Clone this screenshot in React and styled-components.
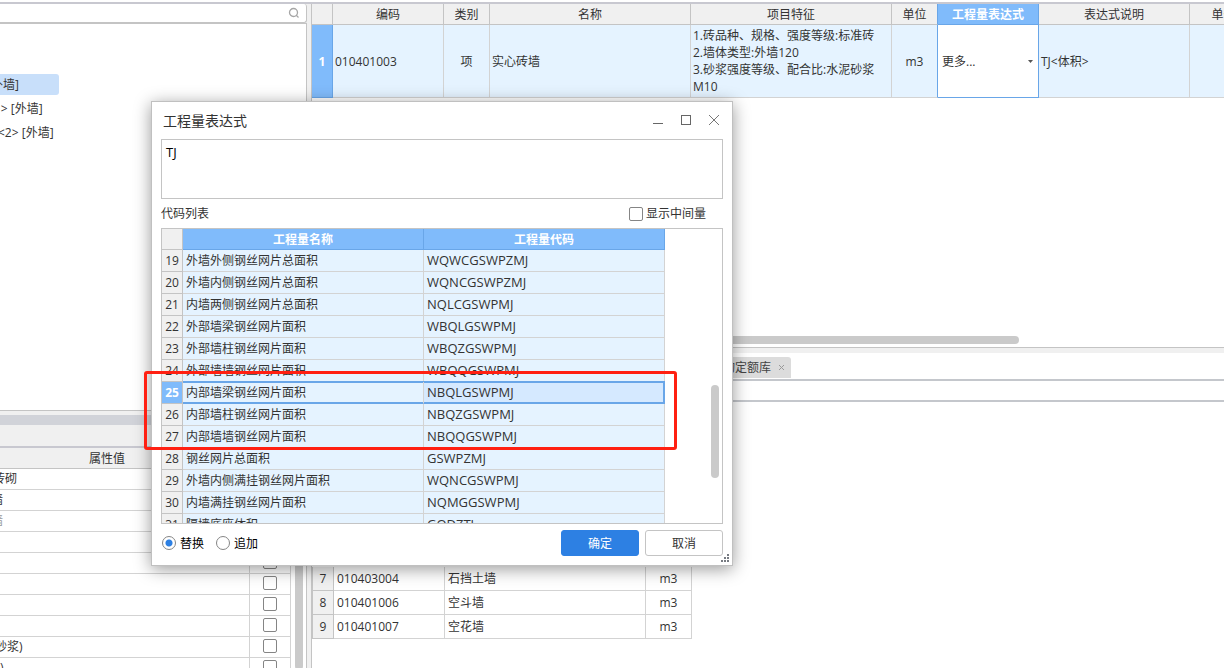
import React, { useState } from "react";
import styled, { createGlobalStyle } from "styled-components";

const line = "#c4c4c4";
const softLine = "#d3d3d3";
const blue = "#80bbfb";
const blueLine = "#69a6e8";
const paleBlue = "#e5f3ff";
const head = "#f0f0f0";

const treeItems = [
  { id: 1, label: "外墙]", hidden: 9, active: true },
  { id: 2, label: "<1> [外墙]", hidden: 13 },
  { id: 3, label: "<2> [外墙]", hidden: 2 },
];

const properties = [
  { id: 1, value: "砖砌", hidden: 7 },
  { id: 2, value: "墙", hidden: 9 },
  { id: 3, value: "墙", hidden: 9, muted: true },
  { id: 4, value: "" },
  { id: 5, value: "" },
  { id: 6, value: "" },
  { id: 7, value: "" },
  { id: 8, value: "" },
  { id: 9, value: "砂浆)", hidden: 5 },
  { id: 10, value: ")", hidden: 0 },
];

const codes = [
  { id: 19, name: "外墙外侧钢丝网片总面积", code: "WQWCGSWPZMJ" },
  { id: 20, name: "外墙内侧钢丝网片总面积", code: "WQNCGSWPZMJ" },
  { id: 21, name: "内墙两侧钢丝网片总面积", code: "NQLCGSWPMJ" },
  { id: 22, name: "外部墙梁钢丝网片面积", code: "WBQLGSWPMJ" },
  { id: 23, name: "外部墙柱钢丝网片面积", code: "WBQZGSWPMJ" },
  { id: 24, name: "外部墙墙钢丝网片面积", code: "WBQQGSWPMJ" },
  { id: 25, name: "内部墙梁钢丝网片面积", code: "NBQLGSWPMJ" },
  { id: 26, name: "内部墙柱钢丝网片面积", code: "NBQZGSWPMJ" },
  { id: 27, name: "内部墙墙钢丝网片面积", code: "NBQQGSWPMJ" },
  { id: 28, name: "钢丝网片总面积", code: "GSWPZMJ" },
  { id: 29, name: "外墙内侧满挂钢丝网片面积", code: "WQNCGSWPMJ" },
  { id: 30, name: "内墙满挂钢丝网片面积", code: "NQMGGSWPMJ" },
  { id: 31, name: "隔墙底座体积", code: "GQDZTJ" },
];

const listItems = [
  { id: 7, code: "010403004", name: "石挡土墙", unit: "m3" },
  { id: 8, code: "010401006", name: "空斗墙", unit: "m3" },
  { id: 9, code: "010401007", name: "空花墙", unit: "m3" },
];

export default function App() {
  return (
    <>
      <GlobalStyle />
      <Page>
        <Sidebar>
          <SearchBox>
            <input aria-label="search" type="text" />
            <svg width="12" height="12" viewBox="0 0 12 12" fill="none">
              <circle cx="5.5" cy="5.5" r="4" stroke="#a6a6a6" strokeWidth="1.3" />
              <path d="M8 8L10.5 10.5" stroke="#a6a6a6" strokeWidth="1.3" />
            </svg>
          </SearchBox>
          <Tree>
            {treeItems.map((e) => (
              <TreeItem key={e.id} $active={e.active}>
                <Clipped $hidden={e.hidden}>{e.label}</Clipped>
              </TreeItem>
            ))}
          </Tree>
          <Splitter />
          <PropertyBar />
          <PropertyArea>
            <PropertyTable />
            <PropertyTrack>
              <VerticalThumb />
            </PropertyTrack>
          </PropertyArea>
        </Sidebar>
        <Main>
          <TopPane>
            <QuantityTable />
            <HorizontalThumb />
          </TopPane>
          <BottomPane>
            <Tabs>
              <Tab>
                查询定额库
                <svg width="7" height="7" viewBox="0 0 7 7">
                  <path d="M1 1L6 6M6 1L1 6" stroke="#9a9a9a" />
                </svg>
              </Tab>
            </Tabs>
            <FilterBar />
            <ListTable />
          </BottomPane>
        </Main>
        <ExpressionDialog />
      </Page>
    </>
  );
}

const PropertyTable = () => {
  return (
    <PropertyGrid>
      <colgroup>
        <col />
        <col style={{ width: 41 }} />
      </colgroup>
      <thead>
        <tr>
          <th>属性值</th>
          <th />
        </tr>
      </thead>
      <tbody>
        {properties.map((e) => (
          <tr key={e.id}>
            <PropertyCell $muted={e.muted}>
              <Clipped $hidden={e.hidden}>{e.value}</Clipped>
            </PropertyCell>
            <td>
              <CheckBox type="checkbox" aria-label={e.value || "附加"} />
            </td>
          </tr>
        ))}
      </tbody>
    </PropertyGrid>
  );
};

const QuantityTable = () => {
  const widths = [21, 111, 46, 201, 201, 46, 101, 151, 68];
  return (
    <Quantity>
      <colgroup>
        {widths.map((w, i) => (
          <col key={i} style={{ width: w }} />
        ))}
      </colgroup>
      <thead>
        <tr>
          <th />
          <th>编码</th>
          <th>类别</th>
          <th>名称</th>
          <th>项目特征</th>
          <th className="before-active">单位</th>
          <th className="active">工程量表达式</th>
          <th>表达式说明</th>
          <th>单价</th>
        </tr>
      </thead>
      <tbody>
        <tr>
          <td className="index">1</td>
          <td>010401003</td>
          <td className="center">项</td>
          <td>实心砖墙</td>
          <td className="feature">
            1.砖品种、规格、强度等级:标准砖
            <br />
            2.墙体类型:外墙120
            <br />
            3.砂浆强度等级、配合比:水泥砂浆M10
          </td>
          <td className="center before-active">m3</td>
          <td className="editing">
            <ExpressionSelect>
              <select aria-label="工程量表达式">
                <option>更多...</option>
              </select>
              <svg width="5" height="3" viewBox="0 0 5 3">
                <path d="M0 0H5L2.5 3Z" fill="#555" />
              </svg>
            </ExpressionSelect>
          </td>
          <td>TJ&lt;体积&gt;</td>
          <td />
        </tr>
      </tbody>
    </Quantity>
  );
};

const ListTable = () => {
  return (
    <ListGrid>
      <colgroup>
        <col style={{ width: 21 }} />
        <col style={{ width: 111 }} />
        <col style={{ width: 201 }} />
        <col style={{ width: 46 }} />
      </colgroup>
      <tbody>
        {listItems.map((e) => (
          <tr key={e.id}>
            <td className="index">{e.id}</td>
            <td>{e.code}</td>
            <td>{e.name}</td>
            <td className="center">{e.unit}</td>
          </tr>
        ))}
      </tbody>
    </ListGrid>
  );
};

const ExpressionDialog = () => {
  const [selected, setSelected] = useState(25);
  const [mode, setMode] = useState("replace");

  return (
    <Dialog role="dialog" aria-label="工程量表达式">
      <TitleBar>
        <h1>工程量表达式</h1>
        <WindowButton aria-label="minimize">
          <svg width="12" height="12" viewBox="0 0 12 12">
            <path d="M1 9.5H11" stroke="#666" />
          </svg>
        </WindowButton>
        <WindowButton aria-label="maximize">
          <svg width="12" height="12" viewBox="0 0 12 12" fill="none">
            <rect x="1.5" y="1.5" width="9" height="9" stroke="#666" />
          </svg>
        </WindowButton>
        <WindowButton aria-label="close">
          <svg width="12" height="12" viewBox="0 0 12 12">
            <path d="M1 1L11 11M11 1L1 11" stroke="#777" />
          </svg>
        </WindowButton>
      </TitleBar>
      <Expression aria-label="表达式" defaultValue="TJ" />
      <ListCaption>
        <span>代码列表</span>
        <label>
          <CheckBox type="checkbox" />
          显示中间量
        </label>
      </ListCaption>
      <CodeArea>
        <CodeGrid>
          <colgroup>
            <col style={{ width: 21 }} />
            <col style={{ width: 241 }} />
            <col style={{ width: 241 }} />
          </colgroup>
          <thead>
            <tr>
              <th className="corner" />
              <th>工程量名称</th>
              <th>工程量代码</th>
            </tr>
          </thead>
          <tbody>
            {codes.map((e) => (
              <CodeRow
                key={e.id}
                $selected={e.id === selected}
                onClick={() => setSelected(e.id)}
              >
                <td className="index">{e.id}</td>
                <td className="name">{e.name}</td>
                <td className="code">{e.code}</td>
              </CodeRow>
            ))}
          </tbody>
        </CodeGrid>
        <CodeTrack>
          <VerticalThumb $height="93px" />
        </CodeTrack>
      </CodeArea>
      <Footer>
        <label>
          <Radio
            type="radio"
            name="mode"
            checked={mode === "replace"}
            onChange={() => setMode("replace")}
          />
          替换
        </label>
        <label>
          <Radio
            type="radio"
            name="mode"
            checked={mode === "append"}
            onChange={() => setMode("append")}
          />
          追加
        </label>
        <Buttons>
          <Button $primary>确定</Button>
          <Button>取消</Button>
        </Buttons>
      </Footer>
      <Grip width="8" height="8" viewBox="0 0 8 8" fill="#777b82">
        <path d="M6 0h2v2h-2zM3 3h2v2h-2zM6 3h2v2h-2zM0 6h2v2h-2zM3 6h2v2h-2zM6 6h2v2h-2z" />
      </Grip>
      <Highlight />
    </Dialog>
  );
};

const GlobalStyle = createGlobalStyle`
  * {
    box-sizing: border-box;
  }
  body {
    margin: 0;
    overflow: hidden;
    color: #333;
    background: #fff;
  }
  body, input, button, select, textarea {
    font-family: "Open Sans", "Noto Sans CJK SC", sans-serif;
    font-size: 12px;
    line-height: 17px;
  }
`;

const Page = styled.div`
  position: relative;
  display: flex;
  gap: 4px;
  height: 100vh;
  background: ${head};
  border-top: 2px solid #c8c8d0;
  margin-top: 2px;
`;

const Sidebar = styled.aside`
  display: flex;
  flex-direction: column;
  width: 307px;
  flex-shrink: 0;
  overflow: hidden;
`;

const SearchBox = styled.div`
  display: flex;
  align-items: center;
  height: 19px;
  flex-shrink: 0;
  padding-right: 6px;
  background: #fff;
  border: 1px solid ${line};
  border-width: 0 1px 1px 0;
  border-radius: 0 3px 3px 0;

  input {
    flex: 1;
    min-width: 0;
    height: 16px;
    padding: 0;
    border: none;
    outline: none;
  }
`;

const Tree = styled.ul`
  height: 388px;
  flex-shrink: 0;
  margin: 0;
  padding: 50px 0 0;
  list-style: none;
  background: #fff;
  border: 1px solid ${line};
  border-left: none;
`;

const TreeItem = styled.li`
  width: 59px;
  height: 21px;
  margin-bottom: 3px;
  line-height: 21px;
  border-radius: 0 3px 3px 0;
  overflow: hidden;
  background: ${(p) => (p.$active ? "#c8dffa" : "none")};
`;

/* the pane is scrolled sideways, so labels start left of its edge */
const Clipped = styled.span`
  display: block;
  margin-left: ${(p) => -(p.$hidden || 0)}px;
  white-space: nowrap;
`;

const Splitter = styled.div`
  height: 10px;
  flex-shrink: 0;
  margin-top: 4px;
  background: #d1d3d9;
`;

const PropertyBar = styled.div`
  height: 23px;
  flex-shrink: 0;
  border-bottom: 2px solid #c8c8d0;
`;

const PropertyArea = styled.div`
  display: flex;
  flex: 1;
  min-height: 0;
  background: #fff;
  border-right: 1px solid ${line};
`;

const PropertyTrack = styled.div`
  display: flex;
  flex: 1;
  justify-content: flex-end;
  padding-right: 3px;
`;

const VerticalThumb = styled.div`
  width: 8px;
  height: ${(p) => p.$height || "100%"};
  border-radius: 4px;
  background: #cacaca;
`;

const Table = styled.table`
  table-layout: fixed;
  border-collapse: separate;
  border-spacing: 0;
  flex-shrink: 0;

  th,
  td {
    padding: 0 2px;
    text-align: left;
    font-weight: 400;
    white-space: nowrap;
    border-right: 1px solid ${softLine};
    border-bottom: 1px solid ${softLine};
  }
  th {
    text-align: center;
    background: ${head};
    border-color: ${line};
  }
  .center {
    text-align: center;
  }
  .index {
    padding: 0;
    text-align: center;
    background: ${head};
    border-color: ${line};
  }
`;

const PropertyGrid = styled(Table)`
  width: 291px;
  height: max-content;

  th {
    height: 21px;
  }
  th:first-child {
    padding-right: 38px;
    border-right: none;
  }
  td {
    height: 21px;
    padding: 0;
    overflow: hidden;
    line-height: 16px;
    text-align: center;
  }
`;

const PropertyCell = styled.td`
  && {
    text-align: left;
    color: ${(p) => (p.$muted ? "#999" : "#333")};
  }
`;

const CheckBox = styled.input`
  appearance: none;
  display: inline-block;
  width: 14px;
  height: 14px;
  margin: 0;
  vertical-align: top;
  background: #fff;
  border: 1px solid #858585;
  border-radius: 2px;

  &:checked {
    background: #2d80e3;
  }
`;

const Main = styled.main`
  display: flex;
  flex: 1;
  flex-direction: column;
  min-width: 0;
  overflow: hidden;
  border-left: 1px solid ${line};
`;

const TopPane = styled.section`
  display: flex;
  flex-direction: column;
  justify-content: space-between;
  height: 344px;
  flex-shrink: 0;
  overflow: hidden;
  padding-bottom: 3px;
  background: #fff;
  border-bottom: 1px solid ${line};
`;

const Quantity = styled(Table)`
  width: 946px;

  th {
    height: 21px;
  }
  td {
    height: 73px;
    background: ${paleBlue};
  }
  .before-active {
    border-right-color: ${blueLine};
  }
  .active {
    color: #fff;
    font-weight: 700;
    background: ${blue};
    border-color: ${blueLine};
  }
  .feature {
    white-space: normal;
  }
  .editing {
    background: #fff;
    border-color: ${blueLine};
  }
  .index {
    color: #fff;
    font-weight: 700;
    background: ${blue};
    border-color: ${blueLine};
  }
`;

const ExpressionSelect = styled.div`
  display: flex;
  align-items: center;
  padding: 0 3px 0 2px;

  select {
    flex: 1;
    min-width: 0;
    padding: 0;
    color: #333;
    appearance: none;
    background: none;
    border: none;
    outline: none;
  }
`;

const HorizontalThumb = styled.div`
  width: 707px;
  height: 8px;
  border-radius: 4px;
  background: #cacaca;
`;

const BottomPane = styled.section`
  flex: 1;
  margin-top: 5px;
  background: #fff;
`;

const Tabs = styled.div`
  display: flex;
  height: 28px;
  padding: 4px 0 1px 387px;
  border-bottom: 2px solid #c4c7cc;
`;

const Tab = styled.button`
  display: flex;
  align-items: center;
  gap: 7px;
  padding: 0 6px 0 12px;
  color: #444;
  background: #dcdcdc;
  border: none;
  border-radius: 3px 3px 0 0;
`;

const FilterBar = styled.div`
  height: 21px;
  border-bottom: 2px solid #c4c7cc;
`;

const ListGrid = styled(Table)`
  width: 380px;
  margin-top: 165px;
  border-left: 1px solid ${line};

  td {
    height: 24px;
    padding: 0 3px;
  }
`;

const Dialog = styled.div`
  position: absolute;
  top: 97px;
  left: 151px;
  width: 582px;
  padding: 0 9px 9px;
  background: #fff;
  border: 1px solid #c0c0c0;
  box-shadow: 0 3px 16px rgba(0, 0, 0, 0.4);
`;

const TitleBar = styled.div`
  display: flex;
  align-items: center;
  gap: 16px;
  height: 37px;
  padding: 0 3px 0 2px;

  h1 {
    flex: 1;
    margin: 0;
    font-size: 14px;
    font-weight: 400;
  }
`;

const WindowButton = styled.button`
  display: flex;
  padding: 0 0 2px;
  background: none;
  border: none;
`;

const Expression = styled.textarea`
  display: block;
  width: 100%;
  height: 60px;
  padding: 4px;
  font-size: 13px;
  color: #000;
  border: 1px solid ${line};
  outline: none;
  resize: none;
`;

const ListCaption = styled.div`
  display: flex;
  align-items: center;
  justify-content: space-between;
  height: 29px;
  padding-right: 17px;

  label {
    display: flex;
    align-items: center;
    gap: 3px;
  }
`;

const CodeArea = styled.div`
  display: flex;
  height: 296px;
  overflow: hidden;
  border: 1px solid ${line};
`;

const CodeGrid = styled(Table)`
  width: 503px;
  height: max-content;

  th {
    height: 21px;
    color: #fff;
    font-weight: 700;
    background: ${blue};
    border-color: ${blueLine};
  }
  .corner {
    background: ${head};
    border-color: ${line};
  }
`;

const CodeRow = styled.tr`
  td {
    height: 22px;
    padding: 0 3px;
    background: ${paleBlue};
  }
  td.index {
    padding: 0;
    color: ${(p) => (p.$selected ? "#fff" : "#333")};
    font-weight: ${(p) => (p.$selected ? 700 : 400)};
    background: ${(p) => (p.$selected ? blue : head)};
  }
  td.name {
    box-shadow: ${(p) =>
      p.$selected ? `inset 0 1px ${blueLine}, 0 -1px ${blueLine}, inset 0 -1px ${blueLine}` : "none"};
  }
  td.code {
    font-size: 13px;
    background: ${(p) => (p.$selected ? "#d5e9ff" : paleBlue)};
    box-shadow: ${(p) =>
      p.$selected
        ? `inset 0 1px ${blueLine}, 0 -1px ${blueLine}, inset -1px -1px ${blueLine}`
        : "none"};
  }
  td.name,
  td.code {
    border-bottom-color: ${(p) => (p.$selected ? blueLine : softLine)};
  }
  td.code {
    border-right-color: ${(p) => (p.$selected ? blueLine : softLine)};
  }
`;

const CodeTrack = styled.div`
  display: flex;
  flex: 1;
  align-items: flex-end;
  justify-content: flex-end;
  padding: 0 3px 45px 0;
`;

const Footer = styled.div`
  display: flex;
  align-items: center;
  gap: 11px;
  padding-top: 6px;
  color: #000;

  label {
    display: flex;
    align-items: center;
    gap: 4px;
    padding-left: 1px;
  }
`;

const Radio = styled.input`
  appearance: none;
  width: 14px;
  height: 14px;
  margin: 0;
  background: #fff;
  border: 1px solid #858585;
  border-radius: 50%;

  &:checked {
    background: radial-gradient(#2d80e3 3px, #fff 4px);
  }
`;

const Buttons = styled.div`
  display: flex;
  gap: 6px;
  margin-left: auto;
`;

const Button = styled.button`
  width: 78px;
  height: 26px;
  padding: 0;
  color: ${(p) => (p.$primary ? "#fff" : "#333")};
  background: ${(p) => (p.$primary ? "#2d80e3" : "#fff")};
  border: 1px solid ${(p) => (p.$primary ? "#2d80e3" : line)};
  border-radius: 3px;
`;

const Grip = styled.svg`
  position: absolute;
  right: 3px;
  bottom: 3px;
`;

const Highlight = styled.div`
  position: absolute;
  top: 269px;
  left: -8px;
  width: 533px;
  height: 79px;
  border: 3px solid #ff2012;
  border-radius: 3px;
  pointer-events: none;
`;
